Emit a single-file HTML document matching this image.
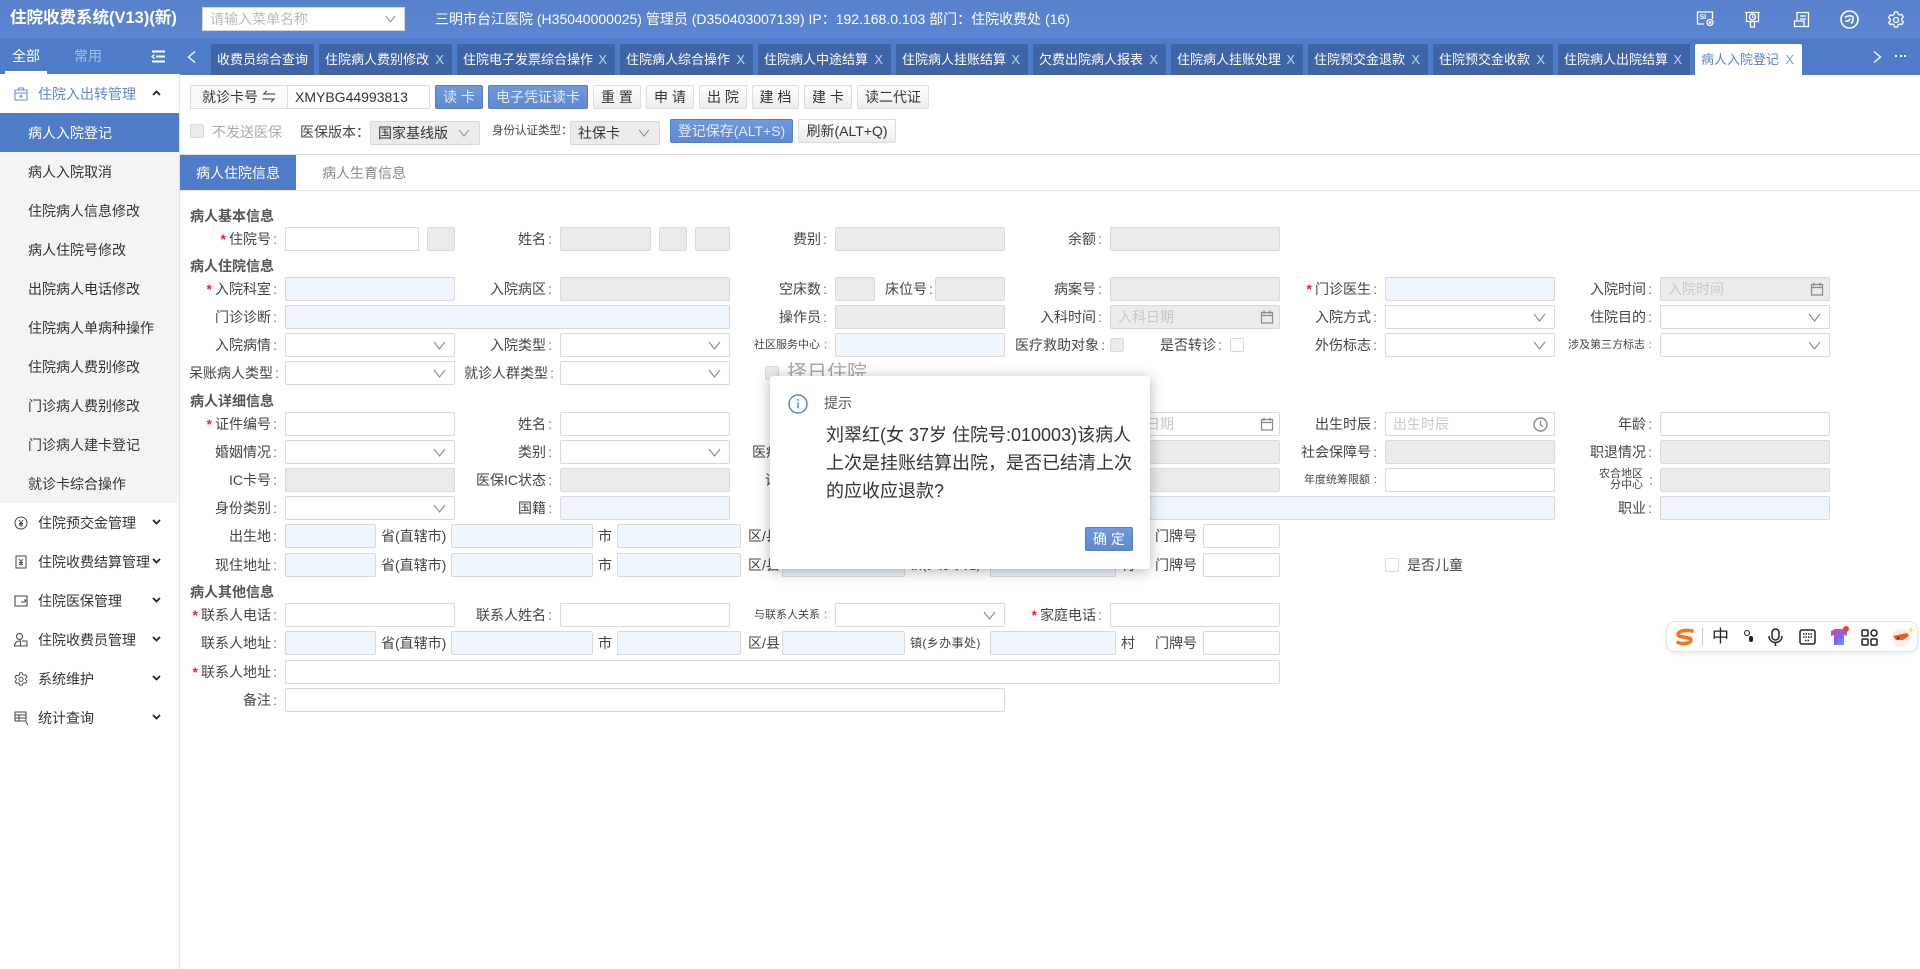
<!DOCTYPE html>
<html lang="zh-CN"><head><meta charset="utf-8"><title>住院收费系统</title>
<style>
*{box-sizing:border-box}
html,body{margin:0;padding:0;width:1920px;height:969px;overflow:hidden;background:#fff;font-family:"Liberation Sans","Noto Sans CJK SC",sans-serif;font-size:14px;color:#333}
.a,.i,.l,.t,.btn,.tab,.m,.sub,.ck,.sec{position:absolute}
.t{white-space:nowrap;line-height:24px}
#hd{position:absolute;left:0;top:0;width:1920px;height:38px;background:linear-gradient(#5881cc,#5b86d2)}
#bar{position:absolute;left:0;top:38px;width:1920px;height:37px;background:#4e7cc9}
.tab{top:44px;height:31px;line-height:31px;background:#3f65a6;color:#fff;font-size:13px;padding-left:6px;border-radius:2px 2px 0 0;white-space:nowrap}
.tab i{position:absolute;right:8px;top:0;font-style:normal;color:#c6d2e8;font-size:13px}
.tab.on{background:#fff;color:#5a83cf}.tab.on i{color:#7d9bd6}
#side{position:absolute;left:0;top:74px;width:180px;height:895px;background:#fff;border-right:1px solid #e6e6e6}
.m{left:0;width:179px;height:39px;line-height:41px;padding-left:38px;color:#333;white-space:nowrap}
.m svg.ic{position:absolute;left:14px;top:13px}
.m svg.ar{position:absolute;left:152px;top:16px}
.sub{left:0;width:179px;height:39px;line-height:41px;padding-left:28px;background:#f4f4f4;color:#333;white-space:nowrap}
.sub.on{background:#4f7cc9;color:#fff}
.btn{height:24px;line-height:22px;top:85px;text-align:center;border:1px solid #ddd;border-radius:2px;background:linear-gradient(#fff,#ececec);color:#333;white-space:nowrap}
.btn.p{background:linear-gradient(#7099dc,#5e88d0);border-color:#5580cb;color:#e3ebf9}
.i{height:24px;border:1px solid #d9d9d9;border-radius:2px;background:#fff}
.g{background:#ebebeb}.b{background:#eef5fd}
.i svg{position:absolute}
.i svg.c{right:8px;top:7px}
.i svg.d{right:5px;top:4px}
.i span{position:absolute;left:7px;top:0;line-height:22px;color:#c8c8c8;white-space:nowrap}
.l{height:24px;line-height:24px;text-align:right;white-space:nowrap;color:#444;width:100px}
.l:after{content:":";display:inline-block;width:6px;text-align:right;color:#666}
.l.nc:after{content:none}
.l b{color:#f01f2d;font-weight:bold;margin-right:3px}
.sm{font-size:11px}.sm:after{width:7px;margin-left:0}
.c1{left:177px}.c2{left:452px}.c3{left:727px}.c4{left:1002px}.c5{left:1277px}.c6{left:1552px}
.sec{left:190px;line-height:20px;font-weight:bold;color:#555;white-space:nowrap}
.ck{width:14px;height:14px;border:1px solid #d9d9d9;border-radius:2px;background:#fff}
.ck.g{background:#ebebeb}
#modal{position:absolute;left:770px;top:376px;width:380px;height:193px;background:#fff;border-radius:3px;box-shadow:0 2px 14px rgba(0,0,0,.3);z-index:5}
#sg{position:absolute;left:1666px;top:621px;width:252px;height:31px;background:#fff;border:1px solid #e3e3e3;border-radius:9px;box-shadow:0 2px 6px rgba(0,0,0,.08);z-index:6}
</style></head><body>
<svg width="0" height="0" style="position:absolute"><defs>
<symbol id="ch" viewBox="0 0 13 9"><path d="M1 1l5.500 7L12 1" fill="none" stroke="#888" stroke-width="1.100"/></symbol>
<symbol id="cal" viewBox="0 0 14 14"><path d="M1.500 2.500h11v10.500h-11zM1.500 5.500h11M4 .5v3.500M10 .5v3.500" fill="none" stroke="#888" stroke-width="1.200"/></symbol>
<symbol id="clk" viewBox="0 0 15 15"><circle cx="7.500" cy="7.500" r="6.500" fill="none" stroke="#888" stroke-width="1.400"/><path d="M7.500 3.500v4.500l2.500 1.500" fill="none" stroke="#888" stroke-width="1.200"/></symbol>
<symbol id="dn" viewBox="0 0 9 6"><path d="M1 1l3.500 3.500L8 1" fill="none" stroke="#222" stroke-width="1.800"/></symbol>
</defs></svg>

<div id="hd">
<div class="t" style="left:10px;top:6px;color:#fff;font-size:16.500px;font-weight:bold">住院收费系统(V13)(新)</div>
<div class="a" style="left:202px;top:7px;width:203px;height:24px;background:#fff;border:1px solid #d5d5d5;line-height:22px;padding-left:7px;color:#bbb">请输入菜单名称<svg style="position:absolute;right:8px;top:7px" width="11" height="8"><use href="#ch"/></svg></div>
<div class="t" style="left:435px;top:7px;color:#fff">三明市台江医院 (H35040000025) 管理员 (D350403007139) IP：192.168.0.103 部门：住院收费处 (16)</div>
<svg class="a" style="left:1696px;top:11px" width="19" height="16" viewBox="0 0 19 16" fill="none" stroke="#fff" stroke-width="1.300"><path d="M8 13H1.500V1h15v7"/><circle cx="14" cy="11.500" r="3"/><circle cx="14" cy="11.500" r=".8" fill="#fff"/><text x="3.500" y="8" font-size="7" fill="#fff" stroke="none" font-weight="bold">SI</text></svg>
<svg class="a" style="left:1744px;top:11px" width="17" height="17" viewBox="0 0 17 17" fill="none" stroke="#fff" stroke-width="1.300"><path d="M1 1.500h15M2.500 1.500v9h12v-9M6.500 10.500v5.500h4v-5.500"/><circle cx="8.500" cy="6" r="3"/><path d="M8.500 4.200v2h1.500" stroke-width="1"/></svg>
<svg class="a" style="left:1793px;top:11px" width="17" height="17" viewBox="0 0 17 17" fill="none" stroke="#fff" stroke-width="1.300"><path d="M4 10V1.500h11.500v14H1.500v-5.500H11v5.500M7 5h6M7 8h6"/></svg>
<svg class="a" style="left:1840px;top:10px" width="19" height="19" viewBox="0 0 19 19" fill="none" stroke="#fff" stroke-width="1.600"><circle cx="9.500" cy="9.500" r="8.500"/><path d="M5 7.500c2-2 6-2 7.500-1 1 1 .5 6-1.500 7M5.500 10.500c1.500 1.500 4 .5 4.500-2"/></svg>
<svg class="a" style="left:1888px;top:11px" width="16" height="17" viewBox="0 0 16 17" fill="none" stroke="#fff" stroke-width="1.300"><path d="M6.500 1h3l.5 2 1.800 1 2-.6 1.500 2.600-1.500 1.500v2l1.500 1.500-1.500 2.600-2-.6-1.800 1-.5 2h-3l-.5-2-1.800-1-2 .6L.7 11.500l1.500-1.500V8L.7 6.500l1.500-2.600 2 .6L6 3.500z"/><circle cx="8" cy="9" r="2.500"/></svg>
</div>

<div id="bar"></div>
<div class="t" style="left:12px;top:44px;color:#fff">全部</div>
<div class="t" style="left:74px;top:44px;color:#a9c1ea">常用</div>
<svg class="a" style="left:151px;top:50px" width="14" height="13" viewBox="0 0 14 13" fill="none" stroke="#fff" stroke-width="2"><path d="M1 1.500h13M5 6.500h9M1 11.500h13"/><path d="M3.500 4.500L1 6.500l2.500 2" stroke-width="1.300"/></svg>
<div class="a" style="left:5px;top:71px;width:42px;height:3px;background:#fff"></div>
<svg class="a" style="left:187px;top:51px" width="9" height="12" viewBox="0 0 9 12" fill="none" stroke="#fff" stroke-width="1.300"><path d="M8 .5L1.500 6 8 11.500"/></svg>
<svg class="a" style="left:1873px;top:51px" width="9" height="12" viewBox="0 0 9 12" fill="none" stroke="#fff" stroke-width="1.300"><path d="M1 .5L7.500 6 1 11.500"/></svg>
<div class="a" style="left:1895px;top:55px;width:11px;height:2px;border-left:2px solid #fff;border-right:2px solid #fff"><div style="width:2px;height:2px;background:#fff;margin:0 auto"></div></div>

<div class="tab" style="left:211px;width:103px">收费员综合查询</div>
<div class="tab" style="left:319px;width:133px">住院病人费别修改<i>X</i></div>
<div class="tab" style="left:457px;width:158px">住院电子发票综合操作<i>X</i></div>
<div class="tab" style="left:620px;width:133px">住院病人综合操作<i>X</i></div>
<div class="tab" style="left:758px;width:133px">住院病人中途结算<i>X</i></div>
<div class="tab" style="left:896px;width:132px">住院病人挂账结算<i>X</i></div>
<div class="tab" style="left:1033px;width:133px">欠费出院病人报表<i>X</i></div>
<div class="tab" style="left:1171px;width:132px">住院病人挂账处理<i>X</i></div>
<div class="tab" style="left:1308px;width:120px">住院预交金退款<i>X</i></div>
<div class="tab" style="left:1433px;width:120px">住院预交金收款<i>X</i></div>
<div class="tab" style="left:1558px;width:132px">住院病人出院结算<i>X</i></div>
<div class="tab on" style="left:1695px;width:107px">病人入院登记<i>X</i></div>

<div id="side"></div>
<div class="m" style="top:74px;color:#5f87d2"><svg class="ic" width="14" height="14" viewBox="0 0 14 14" fill="none" stroke="#6f8fd0" stroke-width="1.100"><path d="M1 3h12v10H1zM4.500 3V1h5v2M1 6h12M7 7.500v3.500M5.300 9.200h3.400"/></svg>住院入出转管理<svg class="ar" width="9" height="6" style="transform:rotate(180deg)"><use href="#dn"/></svg></div>
<div class="sub on" style="top:113px">病人入院登记</div>
<div class="sub" style="top:152px">病人入院取消</div>
<div class="sub" style="top:191px">住院病人信息修改</div>
<div class="sub" style="top:230px">病人住院号修改</div>
<div class="sub" style="top:269px">出院病人电话修改</div>
<div class="sub" style="top:308px">住院病人单病种操作</div>
<div class="sub" style="top:347px">住院病人费别修改</div>
<div class="sub" style="top:386px">门诊病人费别修改</div>
<div class="sub" style="top:425px">门诊病人建卡登记</div>
<div class="sub" style="top:464px">就诊卡综合操作</div>
<div class="m" style="top:503px"><svg class="ic" width="14" height="14" viewBox="0 0 14 14" fill="none" stroke="#444" stroke-width="1"><circle cx="7" cy="7" r="6"/><path d="M5 4l2 3 2-3M7 7v3.500M5 7.500h4M5 9h4"/></svg>住院预交金管理<svg class="ar" width="9" height="6"><use href="#dn"/></svg></div>
<div class="m" style="top:542px"><svg class="ic" width="14" height="14" viewBox="0 0 14 14" fill="none" stroke="#444" stroke-width="1"><path d="M2 1h10v12H2zM5 4l2 2.500L9 4M7 6.500v4M5 7.500h4M5 9.300h4"/></svg>住院收费结算管理<svg class="ar" width="9" height="6"><use href="#dn"/></svg></div>
<div class="m" style="top:581px"><svg class="ic" width="14" height="14" viewBox="0 0 14 14" fill="none" stroke="#444" stroke-width="1.100"><path d="M1 2h12v10H1z"/><path d="M7 8h4M10 6h1.500v2" stroke-width="1"/></svg>住院医保管理<svg class="ar" width="9" height="6"><use href="#dn"/></svg></div>
<div class="m" style="top:620px"><svg class="ic" width="14" height="14" viewBox="0 0 14 14" fill="none" stroke="#444" stroke-width="1"><circle cx="5.500" cy="3.500" r="3"/><path d="M.5 13c0-3 2-5 5-5h1v5zM8 8h5v5H6.500"/></svg>住院收费员管理<svg class="ar" width="9" height="6"><use href="#dn"/></svg></div>
<div class="m" style="top:659px"><svg class="ic" width="14" height="14" viewBox="0 0 16 17" fill="none" stroke="#444" stroke-width="1.100"><path d="M6.500 1h3l.5 2 1.800 1 2-.6 1.500 2.600-1.500 1.500v2l1.500 1.500-1.500 2.600-2-.6-1.800 1-.5 2h-3l-.5-2-1.800-1-2 .6L.7 11.500l1.500-1.500V8L.7 6.500l1.500-2.600 2 .6L6 3.500z"/><circle cx="8" cy="9" r="2.500"/></svg>系统维护<svg class="ar" width="9" height="6"><use href="#dn"/></svg></div>
<div class="m" style="top:698px"><svg class="ic" width="14" height="14" viewBox="0 0 14 14" fill="none" stroke="#444" stroke-width="1"><path d="M1 1h11v9H1zM1 4h11M1 7h11M5 4v6M14 14l-2-3"/></svg>统计查询<svg class="ar" width="9" height="6"><use href="#dn"/></svg></div>

<!-- toolbar -->
<div class="a" style="left:190px;top:85px;width:240px;height:24px;border:1px solid #ddd;border-radius:2px"></div>
<div class="a" style="left:190px;top:85px;width:98px;height:24px;border:1px solid #ddd;background:#fafafa;line-height:22px;padding-left:11px;white-space:nowrap">就诊卡号 ⇋</div>
<div class="t" style="left:295px;top:85px">XMYBG44993813</div>
<div class="btn p" style="left:435px;width:48px">读 卡</div>
<div class="btn p" style="left:488px;width:100px">电子凭证读卡</div>
<div class="btn" style="left:593px;width:48px">重 置</div>
<div class="btn" style="left:646px;width:48px">申 请</div>
<div class="btn" style="left:699px;width:48px">出 院</div>
<div class="btn" style="left:752px;width:47px">建 档</div>
<div class="btn" style="left:804px;width:48px">建 卡</div>
<div class="btn" style="left:857px;width:72px">读二代证</div>
<div class="ck g" style="left:190px;top:124px"></div>
<div class="t" style="left:212px;top:120px;color:#aaa">不发送医保</div>
<div class="t" style="left:300px;top:120px;color:#444">医保版本：</div>
<div class="i g" style="left:370px;top:121px;width:110px"><span style="color:#333">国家基线版</span><svg class="c" style="right:9px" width="12" height="8"><use href="#ch"/></svg></div>
<div class="t sm" style="left:492px;top:119px;color:#444;font-size:11.500px">身份认证类型：</div>
<div class="i g" style="left:570px;top:121px;width:90px"><span style="color:#333">社保卡</span><svg class="c" style="right:9px" width="12" height="8"><use href="#ch"/></svg></div>
<div class="btn p" style="left:670px;top:119px;width:123px">登记保存(ALT+S)</div>
<div class="btn" style="left:798px;top:119px;width:98px">刷新(ALT+Q)</div>
<div class="a" style="left:180px;top:154px;width:1740px;height:1px;background:#ddd"></div>
<div class="a" style="left:180px;top:155px;width:116px;height:36px;background:#4f7cc9;color:#fff;line-height:36px;padding-left:16px">病人住院信息</div>
<div class="t" style="left:322px;top:161px;color:#888">病人生育信息</div>
<div class="a" style="left:180px;top:190px;width:1740px;height:1px;background:#e6e6e6"></div>

<!-- 基本 -->
<div class="sec" style="top:206px">病人基本信息</div>
<div class="l c1" style="top:227px"><b>*</b>住院号</div><div class="i" style="left:285px;top:227px;width:134px"></div><div class="i g" style="left:427px;top:227px;width:28px"></div>
<div class="l c2" style="top:227px">姓名</div><div class="i g" style="left:560px;top:227px;width:91px"></div><div class="i g" style="left:659px;top:227px;width:28px"></div><div class="i g" style="left:695px;top:227px;width:35px"></div>
<div class="l c3" style="top:227px">费别</div><div class="i g" style="left:835px;top:227px;width:170px"></div>
<div class="l c4" style="top:227px">余额</div><div class="i g" style="left:1110px;top:227px;width:170px"></div>

<!-- 住院 -->
<div class="sec" style="top:256px">病人住院信息</div>
<div class="l c1" style="top:277px"><b>*</b>入院科室</div><div class="i b" style="left:285px;top:277px;width:170px"></div>
<div class="l c2" style="top:277px">入院病区</div><div class="i g" style="left:560px;top:277px;width:170px"></div>
<div class="l c3" style="top:277px">空床数</div><div class="i g" style="left:835px;top:277px;width:40px"></div>
<div class="l" style="left:833px;top:277px">床位号</div><div class="i g" style="left:935px;top:277px;width:70px"></div>
<div class="l c4" style="top:277px">病案号</div><div class="i g" style="left:1110px;top:277px;width:170px"></div>
<div class="l c5" style="top:277px"><b>*</b>门诊医生</div><div class="i b" style="left:1385px;top:277px;width:170px"></div>
<div class="l c6" style="top:277px">入院时间</div><div class="i g" style="left:1660px;top:277px;width:170px"><span>入院时间</span><svg class="d" width="14" height="14"><use href="#cal"/></svg></div>

<div class="l c1" style="top:305px">门诊诊断</div><div class="i b" style="left:285px;top:305px;width:445px"></div>
<div class="l c3" style="top:305px">操作员</div><div class="i g" style="left:835px;top:305px;width:170px"></div>
<div class="l c4" style="top:305px">入科时间</div><div class="i g" style="left:1110px;top:305px;width:170px"><span>入科日期</span><svg class="d" width="14" height="14"><use href="#cal"/></svg></div>
<div class="l c5" style="top:305px">入院方式</div><div class="i" style="left:1385px;top:305px;width:170px"><svg class="c" width="13" height="9"><use href="#ch"/></svg></div>
<div class="l c6" style="top:305px">住院目的</div><div class="i" style="left:1660px;top:305px;width:170px"><svg class="c" width="13" height="9"><use href="#ch"/></svg></div>

<div class="l c1" style="top:333px">入院病情</div><div class="i" style="left:285px;top:333px;width:170px"><svg class="c" width="13" height="9"><use href="#ch"/></svg></div>
<div class="l c2" style="top:333px">入院类型</div><div class="i" style="left:560px;top:333px;width:170px"><svg class="c" width="13" height="9"><use href="#ch"/></svg></div>
<div class="l c3 sm" style="top:333px">社区服务中心</div><div class="i b" style="left:835px;top:333px;width:170px"></div>
<div class="l" style="left:1005px;top:333px">医疗救助对象</div><div class="ck g" style="left:1110px;top:338px"></div>
<div class="l" style="left:1122px;top:333px">是否转诊</div><div class="ck" style="left:1230px;top:338px"></div>
<div class="l c5" style="top:333px">外伤标志</div><div class="i" style="left:1385px;top:333px;width:170px"><svg class="c" width="13" height="9"><use href="#ch"/></svg></div>
<div class="l c6 sm" style="top:333px">涉及第三方标志</div><div class="i" style="left:1660px;top:333px;width:170px"><svg class="c" width="13" height="9"><use href="#ch"/></svg></div>

<div class="l c1" style="top:361px;left:179px">呆账病人类型</div><div class="i" style="left:285px;top:361px;width:170px"><svg class="c" width="13" height="9"><use href="#ch"/></svg></div>
<div class="l c2" style="top:361px;left:454px">就诊人群类型</div><div class="i" style="left:560px;top:361px;width:170px"><svg class="c" width="13" height="9"><use href="#ch"/></svg></div>
<div class="ck g" style="left:765px;top:366px"></div>
<div class="t" style="left:787px;top:361px;font-size:20px;color:#aaa">择日住院</div>

<!-- 详细 -->
<div class="sec" style="top:391px">病人详细信息</div>
<div class="l c1" style="top:412px"><b>*</b>证件编号</div><div class="i" style="left:285px;top:412px;width:170px"></div>
<div class="l c2" style="top:412px">姓名</div><div class="i" style="left:560px;top:412px;width:170px"></div>
<div class="i" style="left:1110px;top:412px;width:170px"><span>出生日期</span><svg class="d" width="14" height="14"><use href="#cal"/></svg></div>
<div class="l c5" style="top:412px">出生时辰</div><div class="i" style="left:1385px;top:412px;width:170px"><span>出生时辰</span><svg class="d" style="right:6px" width="15" height="15"><use href="#clk"/></svg></div>
<div class="l c6" style="top:412px">年龄</div><div class="i" style="left:1660px;top:412px;width:170px"></div>

<div class="l c1" style="top:440px">婚姻情况</div><div class="i" style="left:285px;top:440px;width:170px"><svg class="c" width="13" height="9"><use href="#ch"/></svg></div>
<div class="l c2" style="top:440px">类别</div><div class="i" style="left:560px;top:440px;width:170px"><svg class="c" width="13" height="9"><use href="#ch"/></svg></div>
<div class="t" style="left:752px;top:440px;color:#444">医疗保险号</div>
<div class="i g" style="left:1110px;top:440px;width:170px"></div>
<div class="l c5" style="top:440px">社会保障号</div><div class="i g" style="left:1385px;top:440px;width:170px"></div>
<div class="l c6" style="top:440px">职退情况</div><div class="i g" style="left:1660px;top:440px;width:170px"></div>

<div class="l c1" style="top:468px">IC卡号</div><div class="i g" style="left:285px;top:468px;width:170px"></div>
<div class="l c2" style="top:468px">医保IC状态</div><div class="i g" style="left:560px;top:468px;width:170px"></div>
<div class="l c3" style="top:468px">证件类型</div>
<div class="i g" style="left:1110px;top:468px;width:170px"></div>
<div class="l c5 sm" style="top:468px">年度统筹限额</div><div class="i" style="left:1385px;top:468px;width:170px"></div>
<div class="l nc sm" style="left:1543px;top:468px;line-height:11px;padding-top:1px">农合地区<br>分中心</div><div class="t" style="left:1649px;top:468px;color:#666">:</div><div class="i g" style="left:1660px;top:468px;width:170px"></div>

<div class="l c1" style="top:496px">身份类别</div><div class="i" style="left:285px;top:496px;width:170px"><svg class="c" width="13" height="9"><use href="#ch"/></svg></div>
<div class="l c2" style="top:496px">国籍</div><div class="i b" style="left:560px;top:496px;width:170px"></div>
<div class="i b" style="left:835px;top:496px;width:720px"></div>
<div class="l c6" style="top:496px">职业</div><div class="i b" style="left:1660px;top:496px;width:170px"></div>

<div class="l c1" style="top:524px">出生地</div><div class="i b" style="left:285px;top:524px;width:91px"></div>
<div class="t" style="left:381px;top:524px;color:#444">省(直辖市)</div><div class="i b" style="left:451px;top:524px;width:142px"></div>
<div class="t" style="left:598px;top:524px;color:#444">市</div><div class="i b" style="left:617px;top:524px;width:124px"></div>
<div class="t" style="left:748px;top:524px;color:#444">区/县</div>
<div class="t" style="left:1155px;top:524px;color:#444">门牌号</div><div class="i" style="left:1203px;top:524px;width:77px"></div>

<div class="l c1" style="top:553px">现住地址</div><div class="i b" style="left:285px;top:553px;width:91px"></div>
<div class="t" style="left:381px;top:553px;color:#444">省(直辖市)</div><div class="i b" style="left:451px;top:553px;width:142px"></div>
<div class="t" style="left:598px;top:553px;color:#444">市</div><div class="i b" style="left:617px;top:553px;width:124px"></div>
<div class="t" style="left:748px;top:553px;color:#444">区/县</div><div class="i b" style="left:782px;top:553px;width:123px"></div>
<div class="t" style="left:910px;top:553px;color:#444;font-size:12px;letter-spacing:.4px">镇(乡办事处)</div><div class="i b" style="left:990px;top:553px;width:126px"></div>
<div class="t" style="left:1121px;top:553px;color:#444">村</div>
<div class="t" style="left:1155px;top:553px;color:#444">门牌号</div><div class="i" style="left:1203px;top:553px;width:77px"></div>
<div class="ck" style="left:1385px;top:558px"></div><div class="t" style="left:1407px;top:553px;color:#444">是否儿童</div>

<!-- 其他 -->
<div class="sec" style="top:582px">病人其他信息</div>
<div class="l c1" style="top:603px"><b>*</b>联系人电话</div><div class="i" style="left:285px;top:603px;width:170px"></div>
<div class="l c2" style="top:603px">联系人姓名</div><div class="i" style="left:560px;top:603px;width:170px"></div>
<div class="l c3 sm" style="top:603px">与联系人关系</div><div class="i" style="left:835px;top:603px;width:170px"><svg class="c" width="13" height="9"><use href="#ch"/></svg></div>
<div class="l c4" style="top:603px"><b>*</b>家庭电话</div><div class="i" style="left:1110px;top:603px;width:170px"></div>

<div class="l c1" style="top:631px">联系人地址</div><div class="i b" style="left:285px;top:631px;width:91px"></div>
<div class="t" style="left:381px;top:631px;color:#444">省(直辖市)</div><div class="i b" style="left:451px;top:631px;width:142px"></div>
<div class="t" style="left:598px;top:631px;color:#444">市</div><div class="i b" style="left:617px;top:631px;width:124px"></div>
<div class="t" style="left:748px;top:631px;color:#444">区/县</div><div class="i b" style="left:782px;top:631px;width:123px"></div>
<div class="t" style="left:910px;top:631px;color:#444;font-size:12px;letter-spacing:.4px">镇(乡办事处)</div><div class="i b" style="left:990px;top:631px;width:126px"></div>
<div class="t" style="left:1121px;top:631px;color:#444">村</div>
<div class="t" style="left:1155px;top:631px;color:#444">门牌号</div><div class="i" style="left:1203px;top:631px;width:77px"></div>

<div class="l c1" style="top:660px"><b>*</b>联系人地址</div><div class="i" style="left:285px;top:660px;width:995px"></div>
<div class="l c1" style="top:688px">备注</div><div class="i" style="left:285px;top:688px;width:720px"></div>

<!-- modal -->
<div id="modal">
<svg class="a" style="left:18px;top:18px" width="20" height="20" viewBox="0 0 20 20" fill="none" stroke="#5a84d0" stroke-width="1.500"><circle cx="10" cy="10" r="9"/><path d="M10 8.500v6"/><path d="M10 5v1.800"/></svg>
<div class="t" style="left:54px;top:15px;color:#555">提示</div>
<div class="a" style="left:56px;top:45px;width:320px;font-size:18px;line-height:28px;color:#333;white-space:nowrap">刘翠红(女 37岁 住院号:010003)该病人<br>上次是挂账结算出院，是否已结清上次<br>的应收应退款?</div>
<div class="btn p" style="left:315px;top:151px;width:48px;color:#fff;font-size:14px">确 定</div>
</div>

<!-- sogou bar -->
<div id="sg">
<svg class="a" style="left:8px;top:6px" width="20" height="18" viewBox="0 0 20 18" fill="none" stroke="#f97316" stroke-width="3.600" stroke-linecap="round"><path d="M17 3C11 1.500 3 3 3 6.500S16 8.500 16 12 8 16.500 3 14.500"/></svg>
<div class="a" style="left:35px;top:6px;width:1px;height:18px;background:#ccc"></div>
<div class="a" style="left:45px;top:0;line-height:29px;font-size:17px;color:#222">中</div>
<div class="a" style="left:77px;top:8px;width:6px;height:6px;border:1.500px solid #222;border-radius:50%"></div>
<div class="a" style="left:82px;top:14px;width:4px;height:6px;background:#222;border-radius:2px"></div>
<svg class="a" style="left:101px;top:6px" width="15" height="19" viewBox="0 0 15 19" fill="none" stroke="#222" stroke-width="1.500"><rect x="4" y="1" width="7" height="11" rx="3.500"/><path d="M1 8c0 4 3 6.500 6.500 6.500S14 12 14 8M7.500 15v3"/></svg>
<svg class="a" style="left:132px;top:7px" width="17" height="16" viewBox="0 0 17 16" fill="none" stroke="#222" stroke-width="1.500"><rect x="1" y="1" width="15" height="14" rx="2"/><path d="M4 5h9M4 8h9M6 11.500h5" stroke-dasharray="1.500 1"/></svg>
<svg class="a" style="left:163px;top:3px" width="22" height="22" viewBox="0 0 22 22"><defs><linearGradient id="sh" x1="0" y1="0" x2="1" y2="1"><stop offset="0" stop-color="#e0507a"/><stop offset=".5" stop-color="#8a5cf0"/><stop offset="1" stop-color="#4fb4ff"/></linearGradient></defs><path d="M1 6l4-2h8l4 2v5l-3-1v10H4V10l-3 1z" fill="url(#sh)"/><circle cx="16" cy="4" r="3" fill="#f0442c"/></svg>
<svg class="a" style="left:194px;top:7px" width="17" height="17" viewBox="0 0 17 17" fill="none" stroke="#222" stroke-width="1.500"><rect x="1" y="1" width="6" height="6" rx="1"/><circle cx="13" cy="4" r="3"/><rect x="1" y="10" width="6" height="6" rx="1"/><rect x="10" y="10" width="6" height="6" rx="1"/></svg>
<svg class="a" style="left:224px;top:4px" width="24" height="22" viewBox="0 0 24 22"><circle cx="10" cy="12" r="9.500" fill="#fbeeee"/><path d="M2 10l14-3 2 3-6 4H5z" fill="#ea5a22"/><circle cx="7" cy="12" r="1" fill="#222"/><path d="M20 1l1 2 2 1-2 1-1 2-1-2-2-1 2-1z" fill="#fbdc4a"/></svg>
</div>
</body></html>
